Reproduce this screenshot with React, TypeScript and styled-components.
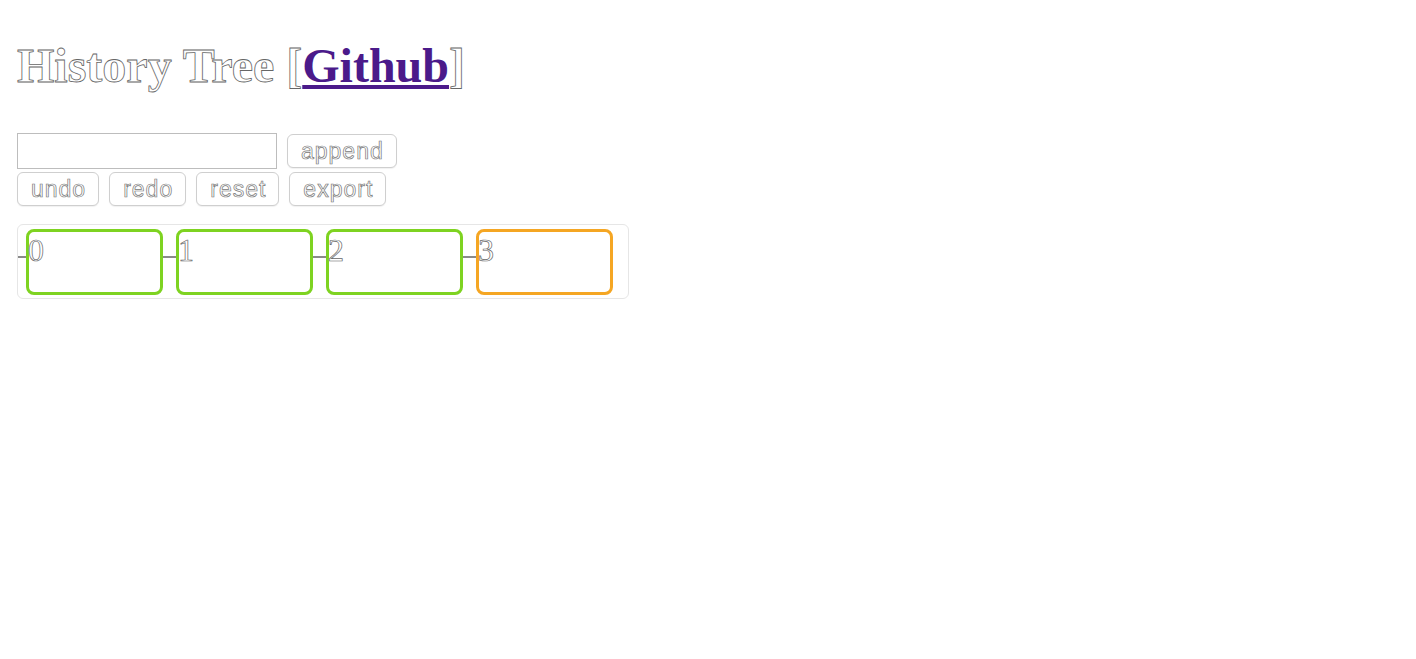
import React from 'react'
import styled, { createGlobalStyle } from 'styled-components'

const GlobalStyle = createGlobalStyle`
  html, body {
    margin: 0;
    padding: 0;
    background: #fff;
  }
  body {
    font-family: "Liberation Serif", "Times New Roman", serif;
  }
`

const Page = styled.div`
  padding: 0 17px;
`

const Title = styled.h1`
  margin: 38px 0 0 0;
  font-size: 48px;
  line-height: 1.15;
  font-weight: bold;
  color: #fff;
  -webkit-text-stroke: 0.8px #666;
`

const GithubLink = styled.a`
  color: #4b1a8a;
  -webkit-text-stroke: 0;
  text-decoration: underline;
`

const Controls = styled.div`
  margin-top: 40px;
  display: flex;
  flex-direction: column;
  gap: 3px;
`

const Row = styled.div`
  display: flex;
  align-items: center;
  gap: 10px;
`

const TextInput = styled.input`
  box-sizing: border-box;
  width: 260px;
  height: 36px;
  border: 1px solid #bdbdbd;
  border-radius: 0;
  padding: 0 6px;
  font-size: 18px;
  outline: none;
`

const Button = styled.button`
  box-sizing: border-box;
  height: 34px;
  padding: 0 12px 0 13px;
  border: 1px solid #cfcfcf;
  border-radius: 6px;
  background: #fff;
  font-family: "Liberation Sans", Arial, sans-serif;
  font-size: 23px;
  letter-spacing: 1px;
  color: #fff;
  -webkit-text-stroke: 0.7px #777;
  box-shadow: 0 1px 1px rgba(0, 0, 0, 0.06);
`

const Tree = styled.div`
  margin-top: 18px;
  width: 612px;
  box-sizing: border-box;
  display: flex;
  align-items: flex-start;
  padding: 4px 15px 3px 0;
  border: 1px solid #e6e6e6;
  border-radius: 6px;
`

const Connector = styled.div<{ $first?: boolean }>`
  flex: none;
  width: ${(p) => (p.$first ? '8px' : '13px')};
  height: 2px;
  margin-top: 27px;
  background: #8a8a8a;
`

const Node = styled.div<{ $current?: boolean }>`
  flex: none;
  box-sizing: border-box;
  width: 137px;
  height: 66px;
  border: 3px solid ${(p) => (p.$current ? '#f5a623' : '#7ed321')};
  border-radius: 8px;
`

const NodeLabel = styled.div`
  margin-left: -1px;
  font-size: 32px;
  line-height: 1.15;
  color: #fff;
  -webkit-text-stroke: 0.7px #666;
`

const nodes = [0, 1, 2, 3]
const current = 3

const App = () => {
  return (
    <Page>
      <GlobalStyle />
      <Title>
        History Tree [<GithubLink href="#">Github</GithubLink>]
      </Title>
      <Controls>
        <Row>
          <TextInput type="text" />
          <Button>append</Button>
        </Row>
        <Row>
          <Button>undo</Button>
          <Button>redo</Button>
          <Button>reset</Button>
          <Button>export</Button>
        </Row>
      </Controls>
      <Tree>
        {nodes.map((n, i) => (
          <React.Fragment key={n}>
            <Connector $first={i === 0} />
            <Node $current={n === current}>
              <NodeLabel>{n}</NodeLabel>
            </Node>
          </React.Fragment>
        ))}
      </Tree>
    </Page>
  )
}

export default App
